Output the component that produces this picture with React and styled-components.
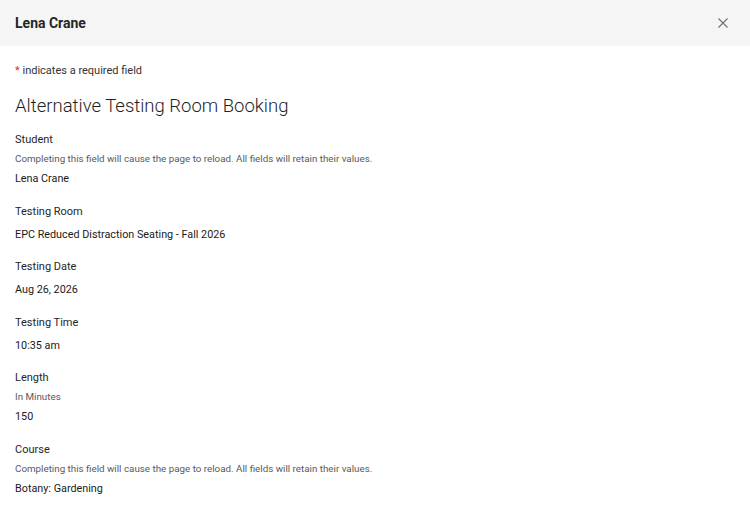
import styled, { createGlobalStyle } from "styled-components";

const GlobalStyle = createGlobalStyle`
  body {
    margin: 0;
    font-family: Roboto, "Liberation Sans", sans-serif;
    background: #ffffff;
    color: #212121;
  }
`;

const Dialog = styled.div`
  width: 750px;
  min-height: 506px;
  background: #ffffff;
`;

const Header = styled.header`
  height: 46px;
  background: #f5f5f5;
  display: flex;
  align-items: center;
  justify-content: space-between;
  padding: 0 22px 0 15px;
`;

const Title = styled.h2`
  margin: 0;
  font-size: 14px;
  font-weight: 700;
  color: #262626;
`;

const CloseButton = styled.button`
  border: 0;
  background: none;
  padding: 0;
  display: flex;
  cursor: pointer;
  color: #707070;
`;

const Body = styled.div`
  padding: 18px 15px 0;
`;

const Required = styled.p`
  margin: 0;
  font-size: 11px;
  line-height: 14px;
  color: #333;

  span {
    color: #d32f2f;
  }
`;

const Heading = styled.h1`
  margin: 16px 0 0;
  font-size: 18.5px;
  font-weight: 300;
  line-height: 24px;
  color: #1f1f1f;
`;

const Field = styled.div`
  margin-top: ${(p) => (p.$first ? "15px" : "18.5px")};
  display: flex;
  flex-direction: column;
`;

const Label = styled.div`
  font-size: 11px;
  line-height: 14px;
  color: #262626;
`;

const Hint = styled.div`
  margin-top: 5px;
  font-size: 9.8px;
  line-height: 14px;
  color: #5a5a5a;
`;

const Value = styled.div`
  margin-top: ${(p) => (p.$afterHint ? "6px" : "9px")};
  font-size: 10.8px;
  line-height: 14px;
  color: #1a1a1a;
`;

const reloadHint =
  "Completing this field will cause the page to reload. All fields will retain their values.";

const fields = [
  { label: "Student", hint: reloadHint, value: "Lena Crane" },
  { label: "Testing Room", value: "EPC Reduced Distraction Seating - Fall 2026" },
  { label: "Testing Date", value: "Aug 26, 2026" },
  { label: "Testing Time", value: "10:35 am" },
  { label: "Length", hint: "In Minutes", value: "150" },
  { label: "Course", hint: reloadHint, value: "Botany: Gardening" },
];

export default function App() {
  return (
    <>
      <GlobalStyle />
      <Dialog>
        <Header>
          <Title>Lena Crane</Title>
          <CloseButton aria-label="Close">
            <svg width="10" height="10" viewBox="0 0 10 10">
              <path d="M0.5 0.5L9.5 9.5M9.5 0.5L0.5 9.5" stroke="currentColor" strokeWidth="1.1" />
            </svg>
          </CloseButton>
        </Header>
        <Body>
          <Required>
            <span>*</span> indicates a required field
          </Required>
          <Heading>Alternative Testing Room Booking</Heading>
          {fields.map((f, i) => (
            <Field key={f.label} $first={i === 0}>
              <Label>{f.label}</Label>
              {f.hint && <Hint>{f.hint}</Hint>}
              <Value $afterHint={!!f.hint}>{f.value}</Value>
            </Field>
          ))}
        </Body>
      </Dialog>
    </>
  );
}
